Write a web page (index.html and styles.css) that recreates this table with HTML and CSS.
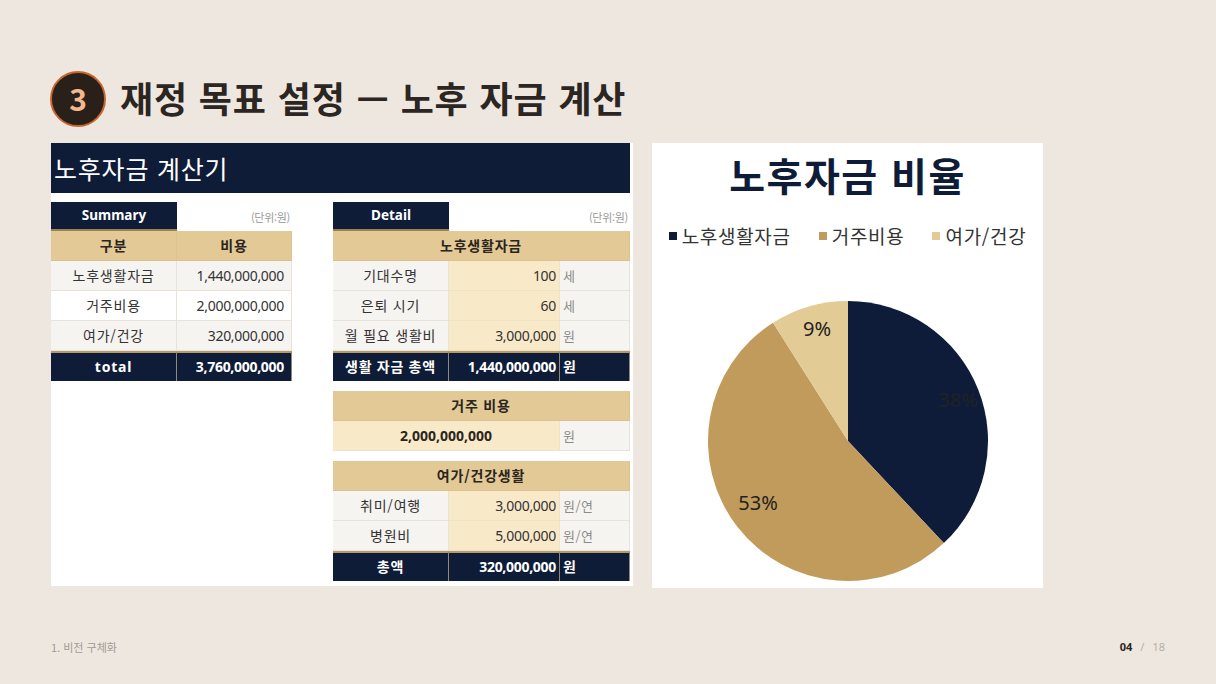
FILE: index.html
```html
<!DOCTYPE html>
<html lang="ko">
<head>
<meta charset="utf-8">
<title>재정 목표 설정 — 노후 자금 계산</title>
<link rel="stylesheet" href="styles.css">
</head>
<body>
<div class="slide">
  <header class="title-row">
    <div class="badge">3</div>
    <h1 class="title">재정 목표 설정 — 노후 자금 계산</h1>
  </header>

  <main class="content">
    <section class="calc">
      <div class="calc-head">노후자금 계산기</div>
      <div class="tables">
        <div class="summary">
          <div class="tab-row">
            <div class="tab">Summary</div>
            <div class="unit">(단위:원)</div>
          </div>
          <div class="grid sum-grid">
            <div class="c hd">구분</div><div class="c hd">비용</div>
            <div class="c lt">노후생활자금</div><div class="c lt num">1,440,000,000</div>
            <div class="c wh">거주비용</div><div class="c wh num">2,000,000,000</div>
            <div class="c lt">여가/건강</div><div class="c lt num">320,000,000</div>
            <div class="c nv">total</div><div class="c nv num">3,760,000,000</div>
          </div>
        </div>

        <div class="detail">
          <div class="tab-row">
            <div class="tab">Detail</div>
            <div class="unit">(단위:원)</div>
          </div>
          <div class="grid det-grid">
            <div class="c hd span3">노후생활자금</div>
            <div class="c lt">기대수명</div><div class="c cr num">100</div><div class="c lt u">세</div>
            <div class="c lt">은퇴 시기</div><div class="c cr num">60</div><div class="c lt u">세</div>
            <div class="c lt">월 필요 생활비</div><div class="c cr num">3,000,000</div><div class="c lt u">원</div>
            <div class="c nv">생활 자금 총액</div><div class="c nv num">1,440,000,000</div><div class="c nv u">원</div>
          </div>
          <div class="grid det-grid block">
            <div class="c hd span3">거주 비용</div>
            <div class="c cr span2 bold">2,000,000,000</div><div class="c lt u">원</div>
          </div>
          <div class="grid det-grid block">
            <div class="c hd span3">여가/건강생활</div>
            <div class="c lt">취미/여행</div><div class="c cr num">3,000,000</div><div class="c lt u">원/연</div>
            <div class="c lt">병원비</div><div class="c cr num">5,000,000</div><div class="c lt u">원/연</div>
            <div class="c nv">총액</div><div class="c nv num">320,000,000</div><div class="c nv u">원</div>
          </div>
        </div>
      </div>
    </section>

    <section class="chart">
      <h2 class="chart-title">노후자금 비율</h2>
      <div class="legend">
        <span class="lg"><i class="sw sw-navy"></i>노후생활자금</span>
        <span class="lg"><i class="sw sw-gold"></i>거주비용</span>
        <span class="lg"><i class="sw sw-light"></i>여가/건강</span>
      </div>
      <svg class="pie" width="282" height="282" viewBox="-1 -1 282 282">
        <path d="M140,140 L140,0 A140,140 0 0 1 235.8,242.1 Z" fill="#0e1c3a"/>
        <path d="M140,140 L235.8,242.1 A140,140 0 1 1 65.0,21.8 Z" fill="#c19b5c"/>
        <path d="M140,140 L65.0,21.8 A140,140 0 0 1 140,0 Z" fill="#e3cb96"/>
        <text x="250" y="106" class="pl">38%</text>
        <text x="50" y="209" class="pl">53%</text>
        <text x="109" y="35" class="pl">9%</text>
      </svg>
    </section>
  </main>

  <footer class="foot">
    <span class="crumb">1. 비전 구체화</span>
    <span class="pager"><b>04</b><span class="sep">/</span><span class="tot">18</span></span>
  </footer>
</div>
</body>
</html>
```

FILE: styles.css
```css
* { box-sizing: border-box; margin: 0; padding: 0; }
html, body { width: 1216px; height: 684px; }
body {
  background: #eee7e0;
  font-family: "Noto Sans CJK KR", "Noto Sans", sans-serif;
  color: #2b2622;
  overflow: hidden;
}
.slide {
  width: 1216px;
  height: 684px;
  padding: 71px 51px 0 51px;
  display: flex;
  flex-direction: column;
}
.title-row {
  display: flex;
  align-items: center;
  gap: 14px;
  height: 56px;
  margin-left: -1px;
}
.badge {
  width: 56px;
  height: 56px;
  border-radius: 50%;
  background: #2a201a;
  border: 2px solid #c8642e;
  color: #f2b88e;
  font-size: 30px;
  font-weight: 700;
  display: flex;
  align-items: center;
  justify-content: center;
  line-height: 1;
  padding-bottom: 3px;
  flex: none;
}
.title {
  font-size: 36px;
  font-weight: 700;
  letter-spacing: 0.85px;
  color: #2b2622;
  line-height: 1;
  padding-bottom: 5px;
  white-space: nowrap;
}
.content {
  margin-top: 16px;
  display: flex;
  gap: 19px;
  align-items: flex-start;
}
.calc {
  width: 582px;
  height: 443px;
  background: #fff;
  padding-right: 3px;
}
.calc-head {
  height: 50px;
  background: #0f1c38;
  color: #fff;
  font-size: 25px;
  line-height: 50px;
  padding-left: 3px;
  letter-spacing: 0.8px;
}
.tables {
  margin-top: 9px;
  display: flex;
  gap: 41px;
}
.summary { width: 241px; }
.detail { width: 297px; }
.tab-row {
  display: flex;
  align-items: center;
  justify-content: space-between;
  height: 29px;
}
.tab {
  width: 126px;
  height: 29px;
  background: #0f1c38;
  color: #fff;
  font-size: 13.5px;
  font-weight: 700;
  text-align: center;
  line-height: 27px;
  border-bottom: 2px solid #9c8252;
  font-family: "Noto Sans", "Noto Sans CJK KR", sans-serif;
}
.detail .tab { width: 116px; }
.unit {
  font-size: 11px;
  color: #9a9a9a;
  padding-right: 2px;
  letter-spacing: -0.3px;
}
.grid { display: grid; }
.sum-grid { grid-template-columns: 126px 115px; }
.det-grid { grid-template-columns: 116px 111px 70px; }
.block { margin-top: 10px; }
.c {
  height: 30px;
  font-size: 14px;
  line-height: 29px;
  text-align: center;
  color: #333;
  border-bottom: 1px solid #e8e2d8;
  border-right: 1px solid #e8e2d8;
  white-space: nowrap;
  letter-spacing: 0.8px;
}
.hd {
  background: #e2c995;
  font-weight: 700;
  color: #2a2520;
  border-color: #dcc291;
}
.lt { background: #f6f4f0; }
.wh { background: #fff; }
.cr { background: #f8e9c9; border-color: #efe2c6; }
.num {
  text-align: right;
  padding-right: 7px;
  font-family: "Noto Sans", sans-serif;
  letter-spacing: -0.3px;
}
.det-grid .num { padding-right: 3px; }
.u {
  text-align: left;
  padding-left: 3px;
  color: #8a8a8a;
  font-size: 13px;
  letter-spacing: 0.5px;
}
.nv {
  background: #0f1c38;
  color: #fff;
  font-weight: 700;
  border-top: 2px solid #b39a6a;
  border-right: 1px solid #8f877a;
  border-bottom: none;
  line-height: 27px;
  font-family: "Noto Sans", "Noto Sans CJK KR", sans-serif;
}
.nv.u { color: #fff; font-size: 14px; }
.span3 { grid-column: span 3; }
.span2 { grid-column: span 2; }
.bold { font-weight: 700; color: #2a2520; font-family: "Noto Sans", sans-serif; letter-spacing: 0; }

.chart {
  width: 391px;
  height: 445px;
  background: #fff;
  display: flex;
  flex-direction: column;
  align-items: center;
  padding-top: 8px;
}
.chart-title {
  font-size: 39px;
  font-weight: 700;
  color: #0f1c38;
  line-height: 46px;
  letter-spacing: 1.5px;
  white-space: nowrap;
}
.legend {
  margin-top: 27px;
  display: flex;
  gap: 28px;
  font-size: 19px;
  line-height: 24px;
  color: #333;
  white-space: nowrap;
}
.lg { display: flex; align-items: center; letter-spacing: 0.7px; }
.sw {
  display: inline-block;
  width: 8px;
  height: 8px;
  margin-right: 5px;
}
.sw-navy { background: #0e1c3a; }
.sw-gold { background: #c19b5c; }
.sw-light { background: #e3cb96; }
.pie { margin-top: 52px; }
.pl {
  font-family: "Noto Sans", sans-serif;
  font-size: 20px;
  fill: #222;
  text-anchor: middle;
}

.foot {
  margin-top: auto;
  height: 55px;
  display: flex;
  justify-content: space-between;
  align-items: flex-start;
  padding-top: 10px;
}
.crumb {
  font-size: 11px;
  color: #a19b95;
}
.pager {
  font-size: 11px;
  color: #b5aea8;
  font-family: "Noto Sans", sans-serif;
}
.pager b { color: #2b2622; font-weight: 700; }
.sep { margin: 0 8px; }
```
